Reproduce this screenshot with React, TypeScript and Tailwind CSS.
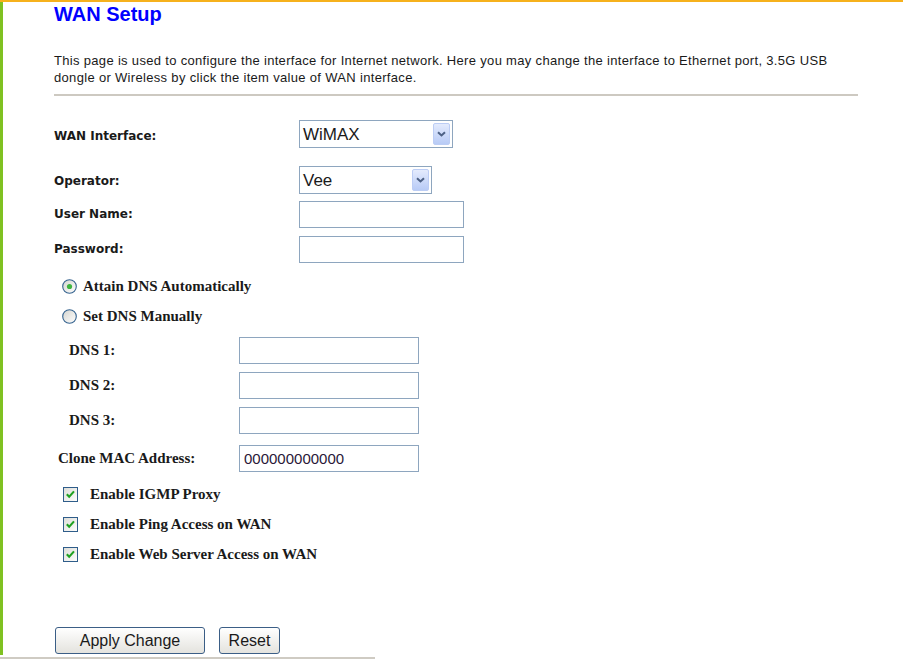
import React from "react"

const sans = "font-['Liberation_Sans',Arial,sans-serif]"
const label = "font-['DejaVu_Sans',Verdana,sans-serif] font-bold text-[12px] leading-[14px] text-[#1a1a1a]"
const serif = "font-['Liberation_Serif','Times_New_Roman',serif] font-bold text-[15px] leading-[17px] text-[#1a1a1a]"

function Select({ value, width }: { value: string; width: string }) {
  return (
    <div
      className={`${width} h-[28px] border border-[#8ea6bf] bg-white flex items-center justify-between pl-[3px] pr-[2px]`}
    >
      <span className={`${sans} text-[17px] leading-[20px] pt-[1px] text-[#1a1a1a]`}>{value}</span>
      <div className="w-[17px] h-[22px] rounded-[2px] border border-[#bccdf5] bg-gradient-to-b from-[#e4ebfd] to-[#b8cbf6] flex items-center justify-center">
        <svg width="9" height="6" viewBox="0 0 9 6">
          <path d="M1 1.2 L4.5 4.5 L8 1.2" fill="none" stroke="#4d6185" strokeWidth="2" />
        </svg>
      </div>
    </div>
  )
}

function TextBox({ width, value = "" }: { width: string; value?: string }) {
  return (
    <input
      readOnly
      defaultValue={value}
      className={`${width} h-[27px] border border-[#8ea6bf] bg-white px-[4px] ${sans} text-[15px] text-[#2a1838] outline-none`}
    />
  )
}

function Radio({ checked }: { checked?: boolean }) {
  return (
    <svg width="15" height="15" viewBox="0 0 15 15">
      <defs>
        <linearGradient id={checked ? "rg1" : "rg2"} x1="0" y1="0" x2="1" y2="1">
          <stop offset="0" stopColor="#d4d4ce" />
          <stop offset="1" stopColor="#ffffff" />
        </linearGradient>
      </defs>
      <circle cx="7.5" cy="7.5" r="6.8" fill={`url(#${checked ? "rg1" : "rg2"})`} stroke="#35638f" strokeWidth="1.1" />
      {checked && <circle cx="7.5" cy="7.5" r="2.6" fill="#3fb53f" />}
    </svg>
  )
}

function Check() {
  return (
    <svg width="15" height="15" viewBox="0 0 15 15">
      <defs>
        <linearGradient id="cg" x1="0" y1="0" x2="1" y2="1">
          <stop offset="0" stopColor="#dcdcd6" />
          <stop offset="1" stopColor="#ffffff" />
        </linearGradient>
      </defs>
      <rect x="0.5" y="0.5" width="14" height="14" fill="url(#cg)" stroke="#2f5d8a" strokeWidth="1" />
      <path d="M3.8 7.2 L6.2 9.7 L11 4.4" fill="none" stroke="#21a121" strokeWidth="2.1" />
    </svg>
  )
}

function Button({ children, width }: { children: React.ReactNode; width: string }) {
  return (
    <button
      className={`${width} h-[27px] rounded-[3px] border border-[#3b5e86] bg-gradient-to-b from-white to-[#e4e3de] ${sans} text-[16px] leading-[20px] text-[#1a1a1a]`}
    >
      {children}
    </button>
  )
}

export default function App() {
  return (
    <div className="w-[903px] h-[660px] bg-white flex flex-col overflow-hidden">
      <div className="h-[2px] bg-[#f6b11c] shrink-0" />
      <div className="flex h-[653px] shrink-0">
        <div className="w-[3px] bg-[#7fc121]" />
        <div className="pl-[51px] flex flex-col">
          <h1 className={`mt-[2px] leading-[20px] text-[20px] font-bold text-[#0000ff] ${sans}`}>WAN Setup</h1>
          <p className={`mt-[28px] text-[13px] leading-[17px] tracking-[0.32px] text-[#1a1a1a] ${sans}`}>
            This page is used to configure the interface for Internet network. Here you may change the interface to
            Ethernet port, 3.5G USB
            <br />
            dongle or Wireless by click the item value of WAN interface.
          </p>
          <div className="mt-[8px] h-[2px] w-[804px] bg-[#cdc9c1]" />

          {/* WAN settings */}
          <div className="mt-[24px] flex items-start">
            <div className={`w-[245px] pt-[9px] ${label}`}>WAN Interface:</div>
            <Select value="WiMAX" width="w-[154px]" />
          </div>
          <div className="mt-[18px] flex items-start">
            <div className={`w-[245px] pt-[8px] ${label}`}>Operator:</div>
            <Select value="Vee" width="w-[133px]" />
          </div>
          <div className="mt-[7px] flex items-start">
            <div className={`w-[245px] pt-[6px] ${label}`}>User Name:</div>
            <TextBox width="w-[165px]" />
          </div>
          <div className="mt-[8px] flex items-start">
            <div className={`w-[245px] pt-[6px] ${label}`}>Password:</div>
            <TextBox width="w-[165px]" />
          </div>

          {/* DNS */}
          <div className="mt-[15px] h-[17px] pl-[8px] flex items-center gap-[6px]">
            <Radio checked />
            <span className={serif}>Attain DNS Automatically</span>
          </div>
          <div className="mt-[13px] h-[17px] pl-[8px] flex items-center gap-[6px]">
            <Radio />
            <span className={serif}>Set DNS Manually</span>
          </div>
          <div className="mt-[12px] flex items-center">
            <div className={`w-[185px] pl-[15px] ${serif}`}>DNS 1:</div>
            <TextBox width="w-[180px]" />
          </div>
          <div className="mt-[8px] flex items-center">
            <div className={`w-[185px] pl-[15px] ${serif}`}>DNS 2:</div>
            <TextBox width="w-[180px]" />
          </div>
          <div className="mt-[8px] flex items-center">
            <div className={`w-[185px] pl-[15px] ${serif}`}>DNS 3:</div>
            <TextBox width="w-[180px]" />
          </div>
          <div className="mt-[11px] flex items-center">
            <div className={`w-[185px] pl-[4px] ${serif}`}>Clone MAC Address:</div>
            <TextBox width="w-[180px]" value="000000000000" />
          </div>

          {/* options */}
          <div className="mt-[14px] h-[17px] pl-[9px] flex items-center gap-[12px]">
            <Check />
            <span className={serif}>Enable IGMP Proxy</span>
          </div>
          <div className="mt-[13px] h-[17px] pl-[9px] flex items-center gap-[12px]">
            <Check />
            <span className={serif}>Enable Ping Access on WAN</span>
          </div>
          <div className="mt-[13px] h-[17px] pl-[9px] flex items-center gap-[12px]">
            <Check />
            <span className={serif}>Enable Web Server Access on WAN</span>
          </div>

          <div className="mt-[64px] pl-[1px] flex gap-[14px]">
            <Button width="w-[150px]">Apply Change</Button>
            <Button width="w-[61px]">Reset</Button>
          </div>
        </div>
      </div>
      <div className="mt-[2px] h-[2px] w-[375px] bg-[#cfcbc3] shrink-0" />
    </div>
  )
}
